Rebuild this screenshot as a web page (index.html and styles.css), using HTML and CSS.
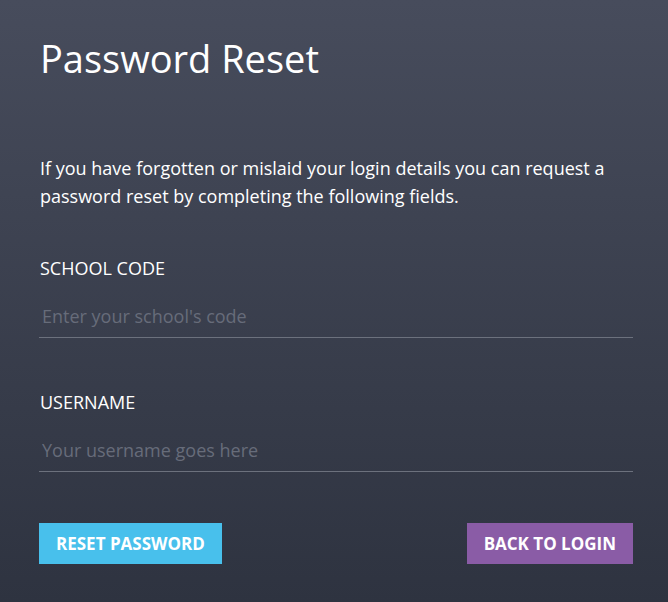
FILE: index.html
```html
<!DOCTYPE html>
<html lang="en">

<head>
  <meta charset="UTF-8" />
  <meta name="viewport" content="width=device-width, initial-scale=1.0" />
  <title>Password Reset</title>
  <link rel="stylesheet" href="styles.css">
</head>

<body>
  <div class="reset-box">
    <h1>Password Reset</h1>
    <p class="intro">If you have forgotten or mislaid your login details you can request a password reset by completing the following fields.</p>

    <form class="reset-form" onsubmit="return false;">
      <label for="school-code">SCHOOL CODE</label>
      <input id="school-code" placeholder="Enter your school's code" />

      <label for="username">USERNAME</label>
      <input id="username" placeholder="Your username goes here" />

      <div class="actions">
        <button type="submit" class="btn-reset">RESET PASSWORD</button>
        <button type="button" class="btn-back">BACK TO LOGIN</button>
      </div>
    </form>
  </div>
</body>

</html>
```

FILE: styles.css
```css
html,
body {
  height: 100%;
}

body {
  font-family: "Open Sans", Arial, sans-serif;
  background: linear-gradient(to bottom, #474c5c 0%, #2e3340 100%);
  color: #fff;
  margin: 0;
  padding: 0;
}

.reset-box {
  margin: 0 35px 0 39px;
  padding-top: 32px;
}

h1 {
  font-size: 38px;
  font-weight: 400;
  margin: 0 0 0 1px;
  line-height: 52px;
}

.intro {
  font-size: 18px;
  line-height: 28px;
  margin: 70px 0 0 1px;
}

.reset-form {
  display: flex;
  flex-direction: column;
  margin-top: 46px;
}

label {
  font-size: 18px;
  margin-left: 1px;
  line-height: 24px;
}

input {
  font-family: inherit;
  font-size: 18px;
  line-height: 24px;
  color: #fff;
  background: transparent;
  border: none;
  border-bottom: 1px solid #6c717d;
  padding: 24px 3px 9px;
  margin-bottom: 52px;
  outline: none;
}

input::placeholder {
  color: #676c7a;
}

.actions {
  display: flex;
  justify-content: space-between;
  margin-top: -1px;
}

button {
  font-family: inherit;
  font-size: 17px;
  font-weight: 700;
  color: #fff;
  border: none;
  cursor: pointer;
  height: 41px;
  padding: 0 17px;
}

.btn-reset {
  background: #48c0ec;
}

.btn-back {
  background: #8a5ca6;
}
```
